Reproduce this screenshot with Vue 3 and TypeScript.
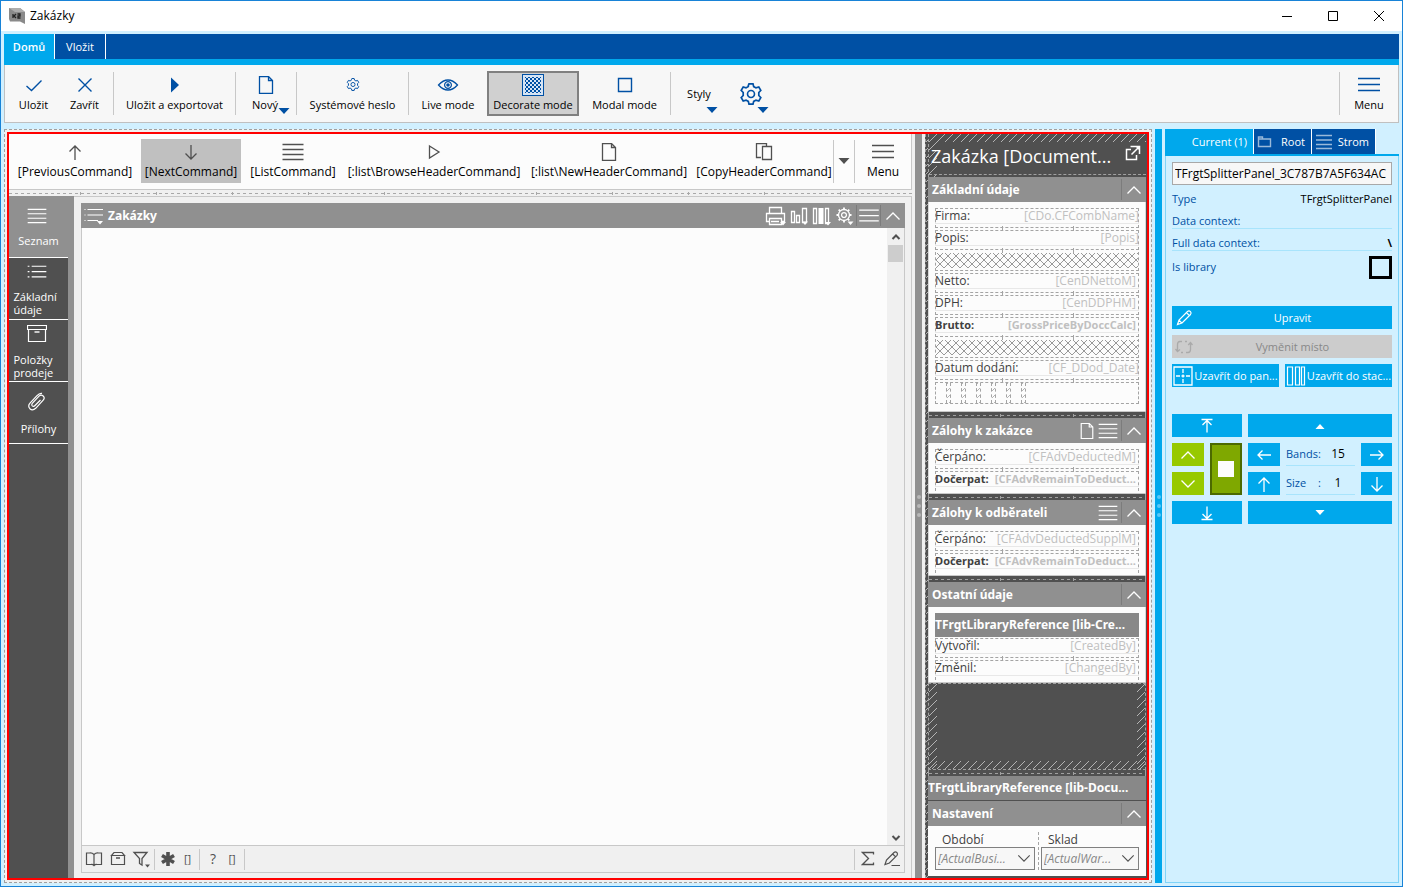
<script setup lang="ts">
import { h, ref, type FunctionalComponent } from 'vue'

interface Shape { d: string; fill?: boolean; w?: number; o?: number }
interface Glyph { w: number; h: number; shapes: Shape[] }

const gearPath = 'M9.3 2.6 L10 0.8 H14 L14.7 3.6 L17 4.9 L19.8 4 L21.8 7.4 L19.8 9.5 V12.5 L21.8 14.6 L19.8 18 L17 17.1 L14.7 18.4 L14 21.2 H10 L9.3 18.4 L7 17.1 L4.2 18 L2.2 14.6 L4.2 12.5 V9.5 L2.2 7.4 L4.2 4 L7 4.9 L9.3 3.6 Z'

const glyphs: Record<string, Glyph> = {
  check: { w: 18, h: 18, shapes: [{ d: 'M1.5 10 L6.5 14.5 L16.5 4.5', w: 1.4 }] },
  cross: { w: 18, h: 18, shapes: [{ d: 'M2.5 2.5 L15.5 15.5 M15.5 2.5 L2.5 15.5', w: 1.4 }] },
  play: { w: 18, h: 18, shapes: [{ d: 'M5 1.5 L13 9 L5 16.5 Z', fill: true }] },
  playOutline: { w: 18, h: 18, shapes: [{ d: 'M4.5 3 L14 9 L4.5 15 Z', w: 1.3 }] },
  page: { w: 18, h: 18, shapes: [{ d: 'M2.5 0.5 H11.5 L15.5 4.5 V17.5 H2.5 Z M11.5 0.5 V4.5 H15.5', w: 1.3 }] },
  pages: { w: 18, h: 18, shapes: [{ d: 'M6 14.5 H1.5 V0.5 H11.5 V3', w: 1.3 }, { d: 'M7.5 3.5 H16.5 V16.5 H7.5 Z', w: 1.3 }] },
  gear: { w: 24, h: 22, shapes: [{ d: gearPath, w: 1.7 }, { d: 'M12 7.5 A3.5 3.5 0 1 0 12 14.5 A3.5 3.5 0 1 0 12 7.5', w: 1.6 }] },
  eye: { w: 22, h: 14, shapes: [{ d: 'M1.5 7 Q6 2 11 2 Q16 2 20.5 7 Q16 12 11 12 Q6 12 1.5 7 Z', w: 1.3 }, { d: 'M11 3.6 A3.4 3.4 0 1 0 11 10.4 A3.4 3.4 0 1 0 11 3.6', w: 1.2 }, { d: 'M11 5.2 A1.8 1.8 0 1 0 11 8.8 A1.8 1.8 0 1 0 11 5.2', fill: true }] },
  square: { w: 18, h: 18, shapes: [{ d: 'M2.5 2.5 H15.5 V15.5 H2.5 Z', w: 1.4 }] },
  lines: { w: 22, h: 18, shapes: [{ d: 'M0.5 1.5 H21.5 M0.5 6.5 H21.5 M0.5 11.5 H21.5 M0.5 16.5 H21.5', w: 1.3 }] },
  menu: { w: 22, h: 18, shapes: [{ d: 'M0 2.5 H22 M0 8.5 H22 M0 14.5 H22', w: 1.4 }] },
  list: { w: 22, h: 18, shapes: [{ d: 'M0.5 2.5 H2.5 M0.5 8.5 H2.5 M0.5 14.5 H2.5 M5 2.5 H21.5 M5 8.5 H21.5 M5 14.5 H21.5', w: 1.3 }] },
  box: { w: 20, h: 18, shapes: [{ d: 'M0.5 0.5 H19.5 V4.5 H0.5 Z M1.5 4.5 V16.5 H18.5 V4.5', w: 1.2 }, { d: 'M7.5 7 H12.5', w: 1.4 }] },
  clip: { w: 20, h: 20, shapes: [{ d: 'M13.5 8 L8 13.5 Q6.5 15 5.3 13.8 Q4.2 12.6 5.5 11.2 L12 4.2 Q14 2.2 16.2 4 Q18.2 6 16.2 8.2 L8.7 16.3 Q5.5 19.2 2.9 16.7 Q0.5 14 3 11.2 L10 3.6 Q12.5 0.8 15 1.4', w: 1.2 }] },
  up: { w: 18, h: 18, shapes: [{ d: 'M9 17 V3 M3.5 8.5 L9 3 L14.5 8.5', w: 1.3 }] },
  down: { w: 18, h: 18, shapes: [{ d: 'M9 2 V16 M3.5 10.5 L9 16 L14.5 10.5', w: 1.3 }] },
  left: { w: 18, h: 18, shapes: [{ d: 'M3 9 H16 M7.5 4.5 L3 9 L7.5 13.5', w: 1.3 }] },
  right: { w: 18, h: 18, shapes: [{ d: 'M2 9 H15 M10.5 4.5 L15 9 L10.5 13.5', w: 1.3 }] },
  top: { w: 18, h: 18, shapes: [{ d: 'M3.5 2.5 H14.5 M9 15.5 V3 M4.5 8 L9 3.5 L13.5 8', w: 1.3 }] },
  bottom: { w: 18, h: 18, shapes: [{ d: 'M3.5 15.5 H14.5 M9 2.5 V15 M4.5 10 L9 14.5 L13.5 10', w: 1.3 }] },
  chevUp: { w: 16, h: 10, shapes: [{ d: 'M1.5 8.5 L8 2 L14.5 8.5', w: 1.3 }] },
  chevDown: { w: 16, h: 10, shapes: [{ d: 'M1.5 1.5 L8 8 L14.5 1.5', w: 1.3 }] },
  scrollUp: { w: 10, h: 8, shapes: [{ d: 'M1.5 6 L5 2.5 L8.5 6', w: 2 }] },
  scrollDown: { w: 10, h: 8, shapes: [{ d: 'M1.5 2 L5 5.5 L8.5 2', w: 2 }] },
  triUp: { w: 12, h: 8, shapes: [{ d: 'M1.5 7 L6 2 L10.5 7 Z', fill: true }] },
  triDown: { w: 12, h: 8, shapes: [{ d: 'M0.5 1 H11.5 L6 7 Z', fill: true }] },
  printer: { w: 22, h: 20, shapes: [{ d: 'M4.5 7 V1.5 H16.5 V7 M4.5 15.5 H1.5 V7.5 H19.5 V15.5 H16.5 M4.5 12.5 H16.5 V18.5 H4.5 Z M6 15.5 H14', w: 1.3 }, { d: 'M15 16 H21 L18 19.5 Z', fill: true }] },
  chart: { w: 18, h: 20, shapes: [{ d: 'M1.5 5.5 H4.5 V16.5 H1.5 Z M6.5 9.5 H9.5 V16.5 H6.5 Z M12.5 2.5 H16.5 V16.5 H12.5 Z', w: 1.3 }, { d: 'M12 15.5 H18 L15 19 Z', fill: true }] },
  columns: { w: 20, h: 20, shapes: [{ d: 'M1.5 2.5 H4.5 V17.5 H1.5 Z M13.5 2.5 H16.5 V17.5 H13.5 Z', w: 1.3 }, { d: 'M6.5 2 H11.5 V18 H6.5 Z M13 16 H19 L16 19.5 Z', fill: true }] },
  cog: { w: 20, h: 20, shapes: [{ d: 'M9 3.5 A5.5 5.5 0 1 0 9 14.5 A5.5 5.5 0 1 0 9 3.5', w: 1.3 }, { d: 'M9 6.6 A2.4 2.4 0 1 0 9 11.4 A2.4 2.4 0 1 0 9 6.6', w: 1.3 }, { d: 'M9 1.5 V3.5 M9 14.5 V16.5 M1.5 9 H3.5 M14.5 9 H16.5 M3.7 3.7 L5.2 5.2 M12.8 12.8 L14.3 14.3 M14.3 3.7 L12.8 5.2 M3.7 14.3 L5.2 12.8', w: 1.8 }, { d: 'M12.5 15.5 H18.5 L15.5 19 Z', fill: true }] },
  listDrop: { w: 22, h: 20, shapes: [{ d: 'M1.5 3.5 H2.5 M1.5 9 H2.5 M1.5 14.5 H2.5 M4.5 3.5 H20 M4.5 9 H20 M4.5 14.5 H15', w: 1.2 }, { d: 'M14 15 H20 L17 18.5 Z', fill: true }] },
  external: { w: 16, h: 16, shapes: [{ d: 'M6 4.5 H1.5 V14.5 H11.5 V10', w: 1.5 }, { d: 'M5.5 1.5 H14.5 V9 M14 2 L6.5 9.5', w: 1.5 }, { d: 'M10 1 H15 V6 Z', fill: true }] },
  folder: { w: 16, h: 14, shapes: [{ d: 'M1.5 2 H5.5 V4 H13.5 V11.5 H1.5 Z M1.5 4 H5.5', w: 1.4, o: 0.6 }] },
  tree: { w: 18, h: 16, shapes: [{ d: 'M1 1.5 H17 M1 6 H17 M1 10.5 H17 M1 14.5 H17', w: 1.5, o: 0.6 }] },
  pencil: { w: 18, h: 18, shapes: [{ d: 'M2.5 15.5 L4 11 L12.5 2.5 Q14 1.2 15.5 2.7 Q16.7 4 15.5 5.5 L7 14 Z M11.5 3.7 L14.3 6.5 M4 11.3 L6.8 14', w: 1.2 }] },
  edit: { w: 18, h: 18, shapes: [{ d: 'M2 14.5 L3.5 10 L11 2.5 Q12.5 1.2 14 2.7 Q15 4 14 5.3 L6.4 13 Z M9.7 4 L12.4 6.7 M8.5 15.5 H17', w: 1.2 }] },
  swap: { w: 18, h: 16, shapes: [{ d: 'M7 2.5 H5 Q2.5 2.5 2.5 5.5 V12 M0.5 10 L2.5 12.5 L5 10.5 M6 13.5 H8 M11 13.5 H13 Q15.5 13.5 15.5 10.5 V4 M13.2 6 L15.5 3.5 L17.5 6 M10 2.5 H12', w: 1.3 }] },
  grid: { w: 20, h: 20, shapes: [{ d: 'M1 1 H19 V19 H1 Z', w: 1.3 }, { d: 'M10 3 V7 M10 8.5 V11.5 M10 13 V17 M3 10 H7 M8.5 10 H11.5 M13 10 H17', w: 1.3 }] },
  stack: { w: 20, h: 20, shapes: [{ d: 'M1.5 1 H6.5 V19 H1.5 Z M9.5 1 H13.5 V19 H9.5 Z M15.5 1 H18.5 V19 H15.5 Z', w: 1.2 }] },
  book: { w: 18, h: 16, shapes: [{ d: 'M9 3.5 Q7 1.5 4.5 2 H1.5 V13.5 H6 Q8 13.3 9 14.5 Q10 13.3 12 13.5 H16.5 V2 H13.5 Q11 1.5 9 3.5 V14', w: 1.2 }] },
  archive: { w: 16, h: 16, shapes: [{ d: 'M4 1.5 H12 L14.5 4.5 H1.5 Z M1.5 4.5 H14.5 V13.5 H1.5 Z', w: 1.2 }, { d: 'M6 7 H10', w: 1.5 }] },
  filter: { w: 20, h: 20, shapes: [{ d: 'M2 3.5 H15 L10 9.5 V16 L7.5 14.5 V9.5 Z', w: 1.3 }, { d: 'M13 15.5 H18 L15.5 18.5 Z', fill: true }] },
  asterisk: { w: 16, h: 16, shapes: [{ d: 'M8 1 V15 M2 4.5 L14 11.5 M14 4.5 L2 11.5', w: 3.6 }] },
  sigma: { w: 14, h: 16, shapes: [{ d: 'M12.5 3.5 V1.5 H1.5 L7.5 7.5 L1.5 13.5 H12.5 V11.5', w: 1.3 }] }
}

const Glyph: FunctionalComponent<{ name: string; size?: number }> = (props) => {
  const g = glyphs[props.name]
  const k = props.size ? props.size / g.w : 1
  return h('svg', { width: Math.round(g.w * k), height: Math.round(g.h * k), viewBox: `0 0 ${g.w} ${g.h}`, 'aria-hidden': 'true' },
    g.shapes.map((s) => h('path', {
      d: s.d,
      fill: s.fill ? 'currentColor' : 'none',
      stroke: s.fill ? 'none' : 'currentColor',
      'stroke-width': s.w ?? 1,
      opacity: s.o ?? 1
    })))
}
Glyph.props = ['name', 'size']

interface Field { kind: 'field' | 'cross'; label?: string; value?: string; bold?: boolean; inset?: boolean }
interface Card { title: string; icons: string[]; library?: string; bands?: boolean; fields: Field[] }

const cards: Card[] = [
  {
    title: 'Základní údaje', icons: [], bands: true,
    fields: [
      { kind: 'field', label: 'Firma:', value: '[CDo.CFCombName]' },
      { kind: 'field', label: 'Popis:', value: '[Popis]' },
      { kind: 'cross' },
      { kind: 'field', label: 'Netto:', value: '[CenDNettoM]', inset: true },
      { kind: 'field', label: 'DPH:', value: '[CenDDPHM]', inset: true },
      { kind: 'field', label: 'Brutto:', value: '[GrossPriceByDoccCalc]', bold: true, inset: true },
      { kind: 'cross' },
      { kind: 'field', label: 'Datum dodání:', value: '[CF_DDod_Date]' }
    ]
  },
  {
    title: 'Zálohy k zakázce', icons: ['page', 'lines'],
    fields: [
      { kind: 'field', label: 'Čerpáno:', value: '[CFAdvDeductedM]', inset: true },
      { kind: 'field', label: 'Dočerpat:', value: '[CFAdvRemainToDeduct...', bold: true, inset: true }
    ]
  },
  {
    title: 'Zálohy k odběrateli', icons: ['lines'],
    fields: [
      { kind: 'field', label: 'Čerpáno:', value: '[CFAdvDeductedSupplM]', inset: true },
      { kind: 'field', label: 'Dočerpat:', value: '[CFAdvRemainToDeduct...', bold: true, inset: true }
    ]
  },
  {
    title: 'Ostatní údaje', icons: [], library: 'TFrgtLibraryReference [lib-Cre...',
    fields: [
      { kind: 'field', label: 'Vytvořil:', value: '[CreatedBy]', inset: true },
      { kind: 'field', label: 'Změnil:', value: '[ChangedBy]', inset: true }
    ]
  }
]

const sections = [
  { icon: 'lines', label: 'Seznam' },
  { icon: 'list', label: 'Základní údaje' },
  { icon: 'box', label: 'Položky prodeje' },
  { icon: 'clip', label: 'Přílohy' }
]

const commands = [
  { icon: 'up', label: '[PreviousCommand]' },
  { icon: 'down', label: '[NextCommand]' },
  { icon: 'lines', label: '[ListCommand]' },
  { icon: 'playOutline', label: '[:list\\BrowseHeaderCommand]' },
  { icon: 'page', label: '[:list\\NewHeaderCommand]' },
  { icon: 'pages', label: '[CopyHeaderCommand]' }
]

const activeSection = ref(0)
const activeCommand = ref(1)
const panelName = ref('TFrgtSplitterPanel_3C787B7A5F634AC')
const isLibrary = ref(false)
</script>

<template>
  <div class="window">
    <svg class="patterns" width="0" height="0" aria-hidden="true">
      <defs>
        <pattern id="hatch" width="8" height="8" patternUnits="userSpaceOnUse">
          <path d="M-1 9 L9 -1" stroke="#b4b4b4" stroke-width="1" />
        </pattern>
        <pattern id="weave" width="8" height="8" patternUnits="userSpaceOnUse">
          <path d="M-1 9 L9 -1 M-1 -1 L9 9" stroke="#999" stroke-width="1" />
        </pattern>
        <pattern id="mesh" width="4" height="4" patternUnits="userSpaceOnUse">
          <path d="M0 0 H2 V2 H0 Z M2 2 H4 V4 H2 Z" fill="#0050a4" />
        </pattern>
      </defs>
    </svg>

    <header class="titlebar">
      <svg class="logo" width="16" height="16" viewBox="0 0 16 16" aria-hidden="true">
        <path d="M0 0 H11 L16 4 V16 L11 13.5 H1 L0 11 Z" fill="#8a8a8a" />
        <path d="M0 0 H11 L16 4 L6 4 Z" fill="#adadad" />
        <path d="M4 6 V10 M7 6 L5 8 L7 10 M8.5 6 H11 V8 H9 V10 H11.5" stroke="#222" stroke-width="1.3" fill="none" />
      </svg>
      <h1>Zakázky</h1>
      <button class="win" aria-label="Minimize"><svg width="12" height="12"><path d="M1 6.5 H11" stroke="#000" /></svg></button>
      <button class="win" aria-label="Maximize"><svg width="12" height="12"><path d="M1.5 1.5 H10.5 V10.5 H1.5 Z" stroke="#000" fill="none" /></svg></button>
      <button class="win" aria-label="Close"><svg width="12" height="12"><path d="M1 1 L11 11 M11 1 L1 11" stroke="#000" /></svg></button>
    </header>

    <nav class="ribbon-tabs">
      <button class="rtab on">Domů</button>
      <button class="rtab">Vložit</button>
    </nav>

    <div class="ribbon">
      <button class="tool"><Glyph name="check" /><span>Uložit</span></button>
      <button class="tool"><Glyph name="cross" /><span>Zavřít</span></button>
      <i class="rule"></i>
      <button class="tool"><Glyph name="play" /><span>Uložit a exportovat</span></button>
      <i class="rule"></i>
      <button class="tool"><Glyph name="page" /><span class="drop">Nový<Glyph name="triDown" /></span></button>
      <i class="rule"></i>
      <button class="tool"><Glyph name="gear" :size="14" /><span>Systémové heslo</span></button>
      <i class="rule"></i>
      <button class="tool"><Glyph name="eye" /><span>Live mode</span></button>
      <button class="tool pressed">
        <svg width="22" height="22" aria-hidden="true">
          <rect x="0.5" y="0.5" width="21" height="21" fill="#d6e4f4" stroke="#0050a4" />
          <rect x="3" y="3" width="16" height="16" fill="url(#mesh)" />
        </svg>
        <span>Decorate mode</span>
      </button>
      <button class="tool"><Glyph name="square" /><span>Modal mode</span></button>
      <i class="rule"></i>
      <button class="tool solo"><span>Styly</span><Glyph class="corner" name="triDown" /></button>
      <button class="tool solo"><Glyph name="gear" /><Glyph class="corner near" name="triDown" /></button>
      <i></i>
      <i class="rule"></i>
      <button class="tool"><Glyph name="menu" /><span>Menu</span></button>
    </div>

    <div class="workspace">
      <main class="canvas">
        <div class="selection">
          <div class="left">
            <div class="commands">
              <button v-for="(c, i) in commands" :key="c.label" class="cmd" :class="{ on: i === activeCommand }" @click="activeCommand = i">
                <Glyph :name="c.icon" /><span>{{ c.label }}</span>
              </button>
              <i class="rule"></i>
              <button class="cmd more" aria-label="Další"><Glyph name="triDown" /></button>
              <i class="rule"></i>
              <button class="cmd"><Glyph name="menu" /><span>Menu</span></button>
            </div>
            <div class="divider"></div>
            <div class="pane">
              <nav class="sections">
                <button v-for="(s, i) in sections" :key="s.label" class="section" :class="{ on: i === activeSection }" @click="activeSection = i">
                  <Glyph :name="s.icon" :size="20" /><span>{{ s.label }}</span>
                </button>
              </nav>
              <div class="listwrap">
                <section class="list">
                  <header class="listhead">
                    <Glyph name="listDrop" />
                    <h2>Zakázky</h2>
                    <button aria-label="Tisk"><Glyph name="printer" /></button>
                    <button aria-label="Graf"><Glyph name="chart" /></button>
                    <button aria-label="Sloupce"><Glyph name="columns" /></button>
                    <button aria-label="Nastavení"><Glyph name="cog" /></button>
                    <button class="edge" aria-label="Nabídka"><Glyph name="menu" :size="20" /></button>
                    <button class="edge last" aria-label="Sbalit"><Glyph name="chevUp" /></button>
                  </header>
                  <div class="listbody">
                    <div class="scroll">
                      <Glyph name="scrollUp" />
                      <div class="thumb"></div>
                      <Glyph name="scrollDown" />
                    </div>
                  </div>
                  <footer class="status">
                    <Glyph name="book" /><Glyph name="archive" /><Glyph name="filter" />
                    <i></i>
                    <Glyph name="asterisk" /><span>[]</span>
                    <i></i>
                    <span class="help">?</span><span>[]</span>
                    <i></i>
                    <b></b>
                    <i></i>
                    <Glyph name="sigma" /><Glyph name="edit" />
                  </footer>
                </section>
              </div>
            </div>
          </div>

          <div class="splitter"><span></span><span></span><span></span></div>

          <aside class="doc">
            <svg class="doc-edge" aria-hidden="true"><rect width="100%" height="100%" fill="url(#hatch)" /></svg>
            <header class="dochead">
              <svg class="strip across" aria-hidden="true"><rect width="100%" height="100%" fill="url(#hatch)" /></svg>
              <svg class="strip down" aria-hidden="true"><rect width="100%" height="100%" fill="url(#hatch)" /></svg>
              <h2>Zakázka [Document...</h2>
              <Glyph name="external" />
            </header>
            <template v-for="card in cards" :key="card.title">
              <section class="card">
                <header class="cardhead">
                  <h3>{{ card.title }}</h3>
                  <Glyph v-for="ic in card.icons" :key="ic" :name="ic" :size="ic === 'lines' ? 20 : 16" />
                  <button aria-label="Sbalit"><Glyph name="chevUp" /></button>
                </header>
                <div class="cardbody">
                  <div v-if="card.library" class="lib nested">{{ card.library }}</div>
                  <template v-for="(f, i) in card.fields" :key="i">
                    <div v-if="f.kind === 'field'" class="row" :class="{ bold: f.bold, inset: f.inset }">
                      <div class="line"><span>{{ f.label }}</span><span class="val">{{ f.value }}</span></div>
                    </div>
                    <svg v-else class="weave" aria-hidden="true"><rect y="1" width="100%" height="15" fill="url(#weave)" /></svg>
                  </template>
                  <div v-if="card.bands" class="bands"><span v-for="n in 6" :key="n"></span></div>
                </div>
              </section>
              <div class="gap"></div>
            </template>
            <div class="void">
              <svg class="strip down" aria-hidden="true"><rect width="100%" height="100%" fill="url(#hatch)" /></svg>
              <svg class="strip down end" aria-hidden="true"><rect width="100%" height="100%" fill="url(#hatch)" /></svg>
              <svg class="strip across end" aria-hidden="true"><rect width="100%" height="100%" fill="url(#hatch)" /></svg>
            </div>
            <div class="gap"></div>
            <div class="lib">TFrgtLibraryReference [lib-Docu...</div>
            <section class="card">
              <header class="cardhead">
                <h3>Nastavení</h3>
                <button aria-label="Sbalit"><Glyph name="chevUp" /></button>
              </header>
              <div class="settings">
                <div class="pick">
                  <label for="period">Období</label>
                  <div class="select"><select id="period"><option>[ActualBusi...</option></select><Glyph name="chevDown" :size="14" /></div>
                </div>
                <div class="between"></div>
                <div class="pick">
                  <label for="store">Sklad</label>
                  <div class="select"><select id="store"><option>[ActualWar...</option></select><Glyph name="chevDown" :size="14" /></div>
                </div>
              </div>
            </section>
          </aside>
        </div>
      </main>

      <div class="splitter blue"><span></span><span></span><span></span></div>

      <aside class="inspector">
        <nav class="itabs">
          <button class="itab on">Current (1)</button>
          <button class="itab"><Glyph name="folder" />Root</button>
          <button class="itab"><Glyph name="tree" />Strom</button>
        </nav>
        <div class="props">
          <input v-model="panelName" class="name" type="text" aria-label="Name" />
          <div class="prop"><span>Type</span><output>TFrgtSplitterPanel</output></div>
          <div class="prop lined"><span>Data context:</span><output></output></div>
          <div class="prop lined"><span>Full data context:</span><output class="strong">\</output></div>
          <div class="prop tall"><label for="islib">Is library</label><input id="islib" v-model="isLibrary" type="checkbox" /></div>
          <button class="act first"><Glyph name="pencil" /><span>Upravit</span></button>
          <button class="act" disabled><Glyph name="swap" /><span>Vyměnit místo</span></button>
          <div class="pair">
            <button class="act tight"><Glyph name="grid" /><span>Uzavřít do pan...</span></button>
            <button class="act tight"><Glyph name="stack" /><span>Uzavřít do stac...</span></button>
          </div>
          <div class="pad">
            <button class="key a" aria-label="Na začátek"><Glyph name="top" /></button>
            <button class="key b" aria-label="Výše"><Glyph name="triUp" /></button>
            <button class="key green" aria-label="Předchozí"><Glyph name="chevUp" /></button>
            <button class="key stop" aria-label="Střed"><span></span></button>
            <button class="key" aria-label="Vlevo"><Glyph name="left" /></button>
            <div class="num"><label for="bands">Bands:</label><input id="bands" type="text" value="15" /></div>
            <button class="key" aria-label="Vpravo"><Glyph name="right" /></button>
            <button class="key green" aria-label="Další"><Glyph name="chevDown" /></button>
            <button class="key" aria-label="Zmenšit"><Glyph name="up" /></button>
            <div class="num"><label for="size"><span>Size</span><span>:</span></label><input id="size" type="text" value="1" /></div>
            <button class="key" aria-label="Zvětšit"><Glyph name="down" /></button>
            <button class="key a" aria-label="Na konec"><Glyph name="bottom" /></button>
            <button class="key b" aria-label="Níže"><Glyph name="triDown" :size="10" /></button>
          </div>
        </div>
      </aside>
    </div>
  </div>
</template>

<style>
body { margin: 0; }
</style>

<style scoped>
* { box-sizing: border-box; }
.window {
  display: flex; flex-direction: column; height: 100vh; min-height: 800px;
  border: 1px solid #1883d7; background: #d1f0ff; color: #000;
  font: 12px/16px "Open Sans", "Noto Sans", sans-serif;
}
button { font: inherit; color: inherit; background: none; border: 0; padding: 0; margin: 0; }
input, select { font: inherit; color: inherit; margin: 0; }
h1, h2, h3 { margin: 0; font: inherit; }
svg { display: block; flex: none; }
.patterns { position: absolute; }

.titlebar { display: flex; align-items: center; height: 30px; flex: none; background: #fff; padding-left: 8px; }
.titlebar h1 { margin-left: 5px; flex: 1; }
.win { width: 46px; height: 30px; display: grid; place-items: center; }

.ribbon-tabs { display: flex; flex: none; margin: 3px 3px 0; height: 31px; background: #0050a4; border-bottom: 6px solid #00a8ec; color: #fff; }
.rtab { border-right: 1px solid #fff; width: 51px; font-size: 11px; }
.rtab.on { background: #00a8ec; font-weight: 600; }

.ribbon {
  display: grid; flex: none; align-items: center; margin: 0 3px 6px; height: 58px; padding-left: 3px;
  grid-template-columns: 51px 51px 4px 121px 1px 60px 1px 111px 1px 78px 92px 91px 1px 56px 48px 1fr 1px 58px;
  background: #f7f7f7; border: 1px solid #c0c0c0; border-top: 0; font-size: 11px;
}
.rule { width: 1px; height: 43px; background: #c8c8c8; justify-self: end; }
.tool { display: grid; grid-template-rows: 22px 18px; justify-items: center; align-items: center; height: 45px; align-content: center; white-space: nowrap; color: #0050a4; }
.tool span { color: #000; }
.tool .drop { display: flex; align-items: flex-end; margin-left: 10px; }
.drop svg { color: #0050a4; margin-bottom: -2px; }
.pressed { background: #d0d0d0; border: 2px solid #808080; height: 45px; }
.solo { grid-template-rows: 45px; position: relative; }
.corner { position: absolute; right: 9px; bottom: 2px; }
.corner.near { right: 6px; }

.workspace { display: flex; flex: 1; min-height: 0; padding: 0 3px 3px; }
.canvas { display: flex; flex: 1; min-width: 0; padding: 2px; background: #f0f0f0; border: 1px dashed #a0a0a0; }
.selection { display: flex; flex: 1; min-width: 0; border: 2px solid #f00; background: #f0f0f0; }
.left { display: flex; flex-direction: column; flex: 1; min-width: 0; }
.commands {
  display: grid; flex: none; height: 56px; align-items: center; padding-bottom: 1px;
  grid-template-columns: 132px 100px 104px 178px 172px 138px 1px 20px 1px 56px;
  background: #fcfcfc; border-bottom: 1px solid #c8c8c8; border-right: 1px solid #c8c8c8;
}
.cmd { display: grid; grid-template-rows: 22px 18px; justify-items: center; align-items: center; height: 44px; align-content: center; white-space: nowrap; color: #505050; }
.cmd span { color: #000; }
.cmd.on { background: #c0c0c0; }
.cmd.more { grid-template-rows: 44px; }
.divider {
  flex: none; height: 6px;
  background:
    repeating-linear-gradient(90deg, #a8a8a8 0 3px, transparent 3px 6px) 0 3px / 100% 1px no-repeat,
    repeating-linear-gradient(90deg, transparent 0 71px, #a8a8a8 71px 72px, transparent 72px 76px) 0 2px / 100% 3px no-repeat,
    #f0f0f0;
}
.pane { display: flex; flex: 1; min-height: 0; }
.sections { width: 65px; flex: none; background: #505050; border-right: 6px solid #909090; color: #fff; display: flex; flex-direction: column; }
.section { display: flex; flex-direction: column; align-items: center; justify-content: center; gap: 10px; height: 62px; padding-top: 2px; border-bottom: 1px solid #fff; font-size: 11px; line-height: 13px; }
.section span { max-width: 50px; text-align: left; }
.section svg { margin-right: 3px; }
.section.on { background: #909090; }
.listwrap { flex: 1; min-width: 0; display: flex; padding: 6px 6px 5px 7px; border-top: 1px solid #c8c8c8; border-right: 1px solid #c8c8c8; }
.list { flex: 1; min-width: 0; display: flex; flex-direction: column; }
.listhead { display: flex; align-items: center; flex: none; height: 25px; background: #909090; color: #fff; padding-left: 2px; }
.listhead h2 { flex: 1; font: 700 12px/16px "Noto Sans", sans-serif; margin-left: 3px; padding-top: 1px; }
.listhead button { width: 23px; height: 21px; display: grid; place-items: center; }
.listhead .edge { border-left: 1px solid #7c7c7c; width: 24px; }
.listhead .last { width: 25px; }
.listbody { flex: 1; display: flex; justify-content: flex-end; background: #fcfcfc; border: 1px solid #c8c8c8; border-top: 0; }
.scroll { width: 17px; display: grid; grid-template-rows: 17px 17px 1fr; justify-items: center; align-items: center; background: #f0f0f0; color: #505050; }
.scroll svg:last-child { align-self: end; margin-bottom: 3px; }
.thumb { width: 15px; height: 17px; background: #cdcdcd; }
.status {
  display: grid; flex: none; height: 27px; align-items: center; justify-items: center; color: #505050;
  grid-template-columns: 24px 24px 24px 1px 25px 15px 5px 26px 12px 7px 1fr 1px 25px 24px;
  border: 1px solid #c8c8c8; border-top: 0;
}
.status i { width: 1px; height: 21px; background: #c8c8c8; justify-self: end; }
.status span { font-size: 11px; }
.status .help { font-size: 14px; }

.splitter { width: 7px; flex: none; margin: 0 3px; background: #909090; display: flex; flex-direction: column; align-items: center; justify-content: center; gap: 5px; }
.splitter span { width: 4px; height: 4px; border-radius: 50%; background: #b8b8b8; }
.splitter.blue { background: #00a8ec; }
.splitter.blue span { background: #58c8f8; }

.doc { position: relative; width: 222px; flex: none; display: flex; flex-direction: column; background: #505050; padding: 0 1px 2px 3px; color: #fff; }
.doc-edge { position: absolute; left: 0; top: 0; width: 3px; height: 100%; border-left: 1px dashed #a0a0a0; }
.dochead { position: relative; display: flex; align-items: center; flex: none; height: 43px; padding: 0 5px 0 2px; border-left: 1px dashed #a0a0a0; }
.dochead h2 { flex: 1; font-size: 18px; line-height: 26px; white-space: nowrap; position: relative; }
.dochead > svg:last-child { position: relative; margin-bottom: 6px; }
.dochead::after { content: ""; position: absolute; left: 0; right: 0; bottom: 2px; border-bottom: 1px dashed #a0a0a0; }
.strip { position: absolute; left: 0; top: 0; }
.strip.across { width: 100%; height: 8px; }
.strip.down { width: 8px; height: 100%; }
.strip.across.end { top: auto; bottom: 0; }
.strip.down.end { left: auto; right: 0; }
.card { flex: none; }
.cardhead { display: flex; align-items: center; height: 25px; background: #909090; padding-left: 4px; gap: 3px; }
.cardhead h3 { flex: 1; font: 700 12px/16px "Noto Sans", sans-serif; padding-top: 1px; white-space: nowrap; }
.cardhead button { width: 25px; height: 21px; display: grid; place-items: center; border-left: 1px solid #7c7c7c; }
.cardbody { display: grid; grid-template-columns: minmax(0, 1fr); row-gap: 2px; padding: 6px 7px 3px; background: #fcfcfc; box-shadow: inset 0 -1px #c8c8c8, inset 1px 0 #d8d8d8, inset -1px 0 #d8d8d8; color: #404040; }
.row { height: 20px; border: 1px dashed #a4a4a4; position: relative; }
.row:last-child { border-bottom: 0; }
.row:not(:last-child)::after {
  content: ""; position: absolute; left: 0; right: 0; top: 17px; height: 5px;
  background: linear-gradient(#a4a4a4, #a4a4a4) 33% 0 / 1px 100% no-repeat, linear-gradient(#a4a4a4, #a4a4a4) 68% 0 / 1px 100% no-repeat;
}
.line { display: flex; justify-content: space-between; margin: -1px -1px 0; height: 16px; border-bottom: 1px solid #e8e8e8; white-space: nowrap; }
.val { color: #c0c0c0; }
.inset .val { margin-right: 3px; }
.bold { font-weight: 700; font-size: 11px; }
.weave { width: 100%; height: 19px; border: 1px dashed #a4a4a4; border-width: 0 1px 1px; }
.bands { display: flex; gap: 10px; height: 22px; margin-bottom: 5px; padding-left: 10px; border: 1px dashed #a4a4a4; }
.bands span { width: 5px; border: 1px dashed #a4a4a4; border-width: 0 1px; background: repeating-linear-gradient(135deg, #b4b4b4 0 1px, transparent 1px 5px); }
.gap {
  flex: none; height: 6px; border: 1px dashed #a0a0a0; border-width: 0 1px;
  background:
    repeating-linear-gradient(90deg, #a0a0a0 0 3px, transparent 3px 6px) 0 3px / 100% 1px no-repeat,
    linear-gradient(#a0a0a0, #a0a0a0) 33% 2px / 1px 3px no-repeat,
    linear-gradient(#a0a0a0, #a0a0a0) 67% 2px / 1px 3px no-repeat;
}
.gap:has(+ .void) { display: none; }
.void { position: relative; flex: 1; border: 1px dashed #a0a0a0; min-height: 20px; }
.lib { flex: none; height: 24px; line-height: 24px; background: #888; color: #fff; font-weight: 700; font-family: "Noto Sans", sans-serif; margin-bottom: 1px; overflow: hidden; white-space: nowrap; }
.lib.nested { margin-bottom: -1px; }
.settings { display: grid; grid-template-columns: 100px 6px 1fr; padding: 6px 7px; background: #fcfcfc; color: #404040; }
.pick label { display: block; height: 15px; line-height: 15px; padding-left: 7px; }
.select { position: relative; }
.select select { appearance: none; width: 100%; height: 23px; border: 1px solid #808080; border-radius: 0; padding: 0 2px; background: #f7f7f7; color: #888; font-style: italic; }
.select svg { position: absolute; right: 4px; top: 7px; color: #505050; }
.between { width: 4px; border-right: 1px dashed #a4a4a4; }

.inspector { width: 234px; flex: none; display: flex; flex-direction: column; font-size: 11px; }
.itabs { display: flex; flex: none; height: 27px; border-bottom: 2px solid #00a8ec; color: #fff; }
.itab { display: flex; align-items: center; justify-content: space-between; background: #0050a4; border-right: 1px solid #fff; padding: 0 6px 0 3px; width: 58px; }
.itab.on { background: #00a8ec; width: 89px; justify-content: flex-end; }
.itab:last-child { width: 64px; }
.props { flex: 1; border: 1px solid #80d4f8; border-top: 0; padding: 6px; color: #0050a4; }
.name { display: block; width: 100%; height: 23px; border: 1px solid #a8a8a8; background: #f7f7f7; color: #000; padding: 0 2px; font-size: 12px; }
.prop { display: flex; justify-content: space-between; align-items: center; height: 21px; margin-top: 1px; padding-top: 5px; border-bottom: 1px solid transparent; }
.prop.lined { border-bottom-color: #a8e4fc; }
.prop output { color: #000; }
.strong { font-weight: 700; }
.prop.tall { height: 23px; padding: 0; margin-top: 5px; }
.prop input { appearance: none; width: 23px; height: 23px; border: 3px solid #000; }
.act { position: relative; display: flex; align-items: center; width: 100%; height: 23px; margin-top: 6px; padding-left: 3px; background: #00a8ec; color: #fff; }
.act span { flex: 1; text-align: center; white-space: nowrap; }
.act.first { margin-top: 27px; }
.act:disabled { background: #ccc; color: #888; }
.act:disabled svg { color: #aaa; }
.pair { display: grid; grid-template-columns: 1fr 1fr; gap: 6px; }
.act.tight { padding-left: 1px; }
.pad { display: grid; grid-template-columns: 32px 32px 32px 1fr 31px; grid-auto-rows: 23px; gap: 6px; margin-top: 27px; }
.key { display: grid; place-items: center; background: #00a8ec; color: #fff; }
.key.a { grid-column: span 2; }
.key.b { grid-column: span 3; }
.key.green { background: #97c900; }
.key.stop { grid-row: span 2; background: #7fa800; border: 2px solid #4c6a00; }
.stop span { width: 16px; height: 16px; background: #fcfcfc; }
.num { display: flex; align-items: center; border-bottom: 1px solid #a8e4fc; }
.num label { display: flex; justify-content: space-between; width: 35px; }
.num input { flex: 1; min-width: 0; width: 20px; border: 0; background: none; color: #000; text-align: center; padding: 0; font-size: 12px; }
</style>
